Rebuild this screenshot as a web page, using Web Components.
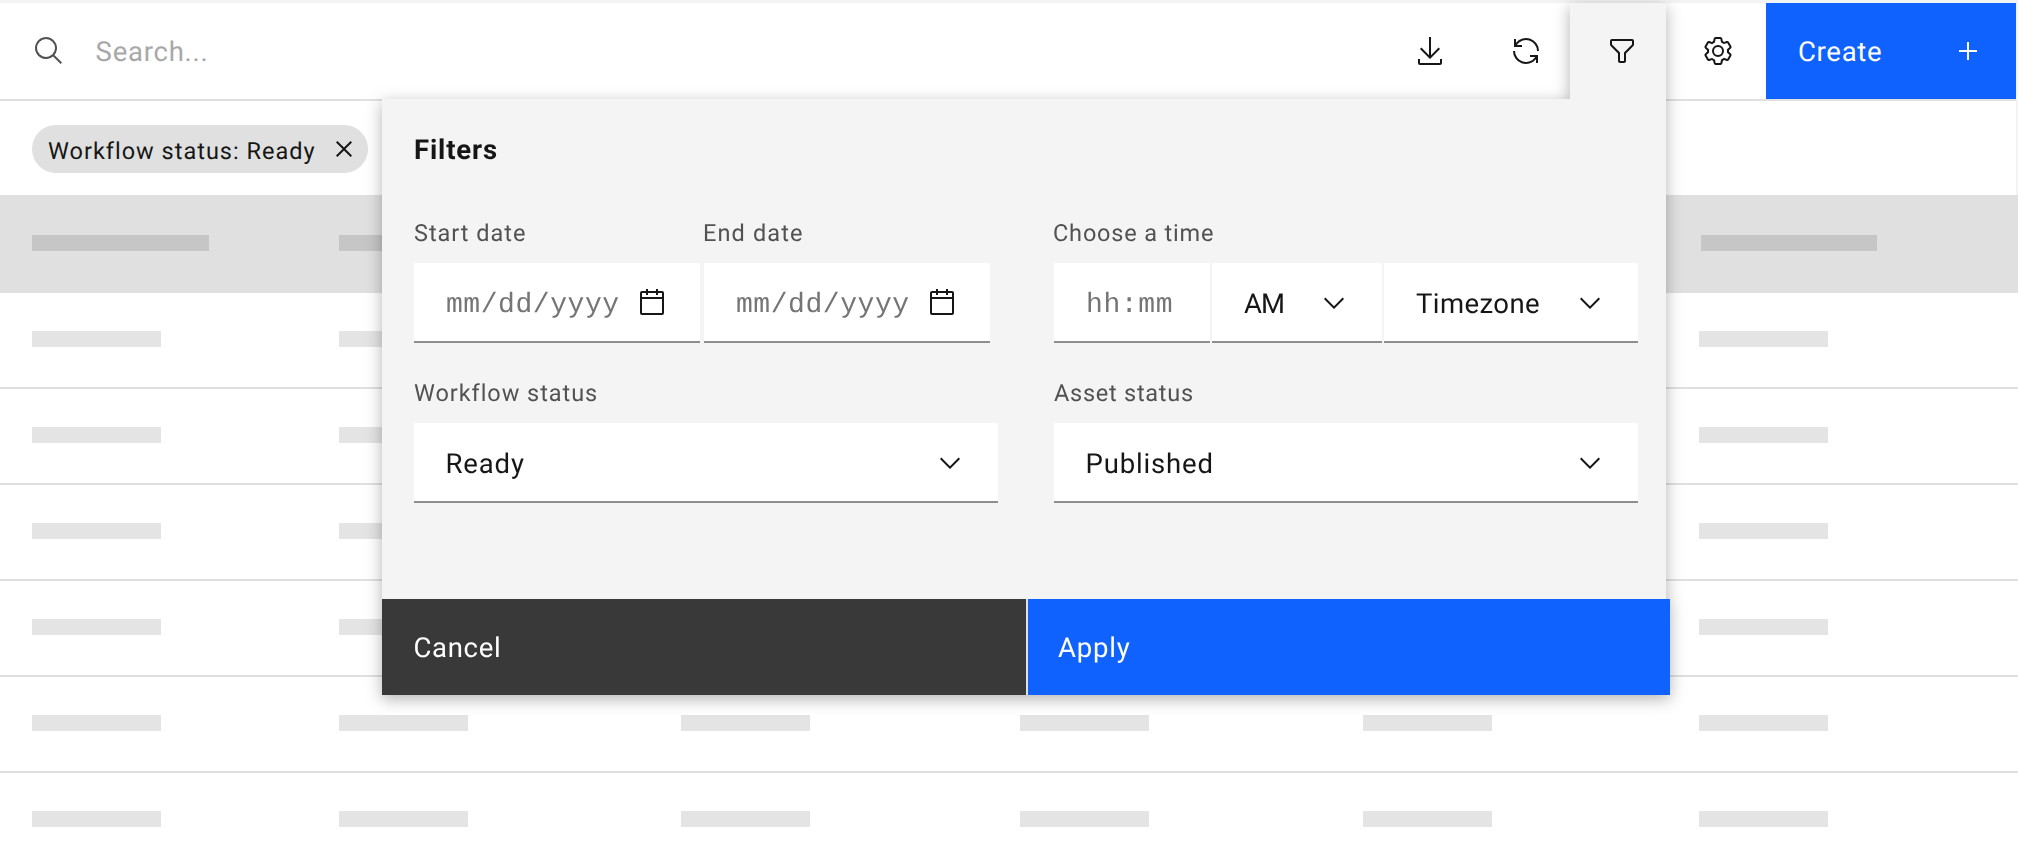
<!DOCTYPE html>
<html lang="en">
<head>
<meta charset="utf-8">
<title>Filters</title>
<style>
html,body{margin:0;height:100%;overflow:hidden;background:#fff}
body{font-family:Roboto,"Liberation Sans",sans-serif;color:#161616;text-rendering:geometricPrecision}
</style>
</head>
<body>
<data-page></data-page>
<script>
const ICONS = {
  search: '<path d="M29 27.59l-7.55-7.55a11 11 0 10-1.41 1.41L27.59 29zM4 13a9 9 0 119 9A9 9 0 014 13z"/>',
  download: '<path d="M26 24v4H6v-4H4v4a2 2 0 002 2h20a2 2 0 002-2v-4zM26 14l-1.41-1.41L17 20.17V2h-2v18.17l-7.59-7.58L6 14l10 10z"/>',
  renew: '<path d="M12 10H6.78A11 11 0 0127 16h2A13 13 0 006 7.68V4H4v8h8zM20 22h5.22A11 11 0 015 16H3a13 13 0 0023 8.32V28h2v-8h-8z"/>',
  filter: '<path d="M18 28h-4a2 2 0 01-2-2v-7.59L4.59 11A2 2 0 014 9.59V6a2 2 0 012-2h20a2 2 0 012 2v3.59a2 2 0 01-.59 1.41L20 18.41V26a2 2 0 01-2 2zM6 6v3.59l8 8V26h4v-8.41l8-8V6z"/>',
  settings: '<path d="M27,16.76c0-.25,0-.5,0-.76s0-.51,0-.77l1.92-1.68A2,2,0,0,0,29.3,11L26.94,7a2,2,0,0,0-1.73-1,2,2,0,0,0-.64.1l-2.43.82a11.35,11.35,0,0,0-1.31-.75l-.51-2.52a2,2,0,0,0-2-1.61H13.64a2,2,0,0,0-2,1.61l-.51,2.52a11.48,11.48,0,0,0-1.32.75L7.43,6.06A2,2,0,0,0,6.79,6,2,2,0,0,0,5.06,7L2.7,11a2,2,0,0,0,.41,2.51L5,15.24c0,.25,0,.5,0,.76s0,.51,0,.77L3.11,18.45A2,2,0,0,0,2.7,21L5.06,25a2,2,0,0,0,1.73,1,2,2,0,0,0,.64-.1l2.43-.82a11.35,11.35,0,0,0,1.31.75l.51,2.52a2,2,0,0,0,2,1.61h4.72a2,2,0,0,0,2-1.61l.51-2.52a11.48,11.48,0,0,0,1.32-.75l2.42.82a2,2,0,0,0,.64.1,2,2,0,0,0,1.73-1L29.3,21a2,2,0,0,0-.41-2.51ZM25.21,24l-3.43-1.16a8.86,8.86,0,0,1-2.71,1.57L18.36,28H13.64l-.71-3.55a9.36,9.36,0,0,1-2.7-1.57L6.79,24,4.43,20l2.72-2.4a8.9,8.9,0,0,1,0-3.13L4.43,12,6.79,8l3.43,1.16a8.86,8.86,0,0,1,2.71-1.57L13.64,4h4.72l.71,3.55a9.36,9.36,0,0,1,2.7,1.57L25.21,8,27.57,12l-2.72,2.4a8.9,8.9,0,0,1,0,3.13L27.57,20Z"/><circle cx="16" cy="16" r="5" fill="none" stroke="currentColor" stroke-width="2"/>',
  add: '<path d="M17 15V7h-2v8H7v2h8v8h2v-8h8v-2z"/>',
  close: '<path d="M24 9.4L22.6 8 16 14.6 9.4 8 8 9.4l6.6 6.6L8 22.6 9.4 24l6.6-6.6 6.6 6.6 1.4-1.4-6.6-6.6z"/>',
  calendar: '<path d="M26 4h-4V2h-2v2h-8V2h-2v2H6a2 2 0 00-2 2v20a2 2 0 002 2h20a2 2 0 002-2V6a2 2 0 00-2-2zM6 6h4v2h2V6h8v2h2V6h4v4H6zm0 6h20v14H6z"/>',
  chevron: '<path d="M16 22L6 12l1.4-1.4 8.6 8.6 8.6-8.6L26 12z"/>'
};

class Base extends HTMLElement {
  render(html) {
    if (!this.shadowRoot) this.attachShadow({ mode: 'open' });
    const t = document.createElement('template');
    t.innerHTML = html;
    this.shadowRoot.replaceChildren(t.content.cloneNode(true));
  }
  a(name, fallback = '') { return this.getAttribute(name) ?? fallback; }
}

customElements.define('ui-icon', class extends Base {
  connectedCallback() {
    this.render(`<style>:host{display:block;width:32px;height:32px;flex:none}svg{display:block;fill:currentColor}</style>
      <svg width="32" height="32" viewBox="0 0 32 32">${ICONS[this.a('name')]}</svg>`);
  }
});

/* One line of text tracked out so that its drawn width equals the "ink" attribute. */
const pen = document.createElement('canvas').getContext('2d');
customElements.define('fit-text', class extends Base {
  connectedCallback() {
    this.render(`<style>:host{display:block;white-space:pre;font-kerning:normal;flex:none}</style><slot></slot>`);
    const cs = getComputedStyle(this), text = this.textContent;
    pen.font = `${cs.fontWeight} ${cs.fontSize} ${cs.fontFamily}`;
    const m = pen.measureText(text);
    const ink = m.actualBoundingBoxRight + m.actualBoundingBoxLeft;
    this.style.letterSpacing = ((+this.a('ink') - ink) / (text.length - 1)).toFixed(3) + 'px';
    this.style.marginLeft = m.actualBoundingBoxLeft.toFixed(2) + 'px';
  }
});

customElements.define('tool-bar', class extends Base {
  connectedCallback() {
    this.render(`<style>
      :host{display:flex;height:96px;border-bottom:2px solid #e0e0e0;margin-right:2px;background:#fff;align-items:center;font-size:27.5px;line-height:32px}
      .search{display:flex;flex:1;gap:32px;padding-left:32.6px;color:#525252}
      .search ui-icon{margin-top:.5px}
      .search fit-text{color:#a8a8a8;padding-top:1px}
      .act{width:96px;display:flex;justify-content:center}
      .create{box-sizing:border-box;width:250px;height:96px;background:#0f62fe;color:#fff;display:flex;align-items:center;justify-content:space-between;padding:0 32px 0 33px}
      .create fit-text{padding-top:1px}
    </style>
    <div class="search"><ui-icon name="search"></ui-icon><fit-text ink="110">Search...</fit-text></div>
    <div class="act"><ui-icon name="download"></ui-icon></div>
    <div class="act"><ui-icon name="renew"></ui-icon></div>
    <div class="act"></div>
    <div class="act"><ui-icon name="settings"></ui-icon></div>
    <div class="create"><fit-text ink="82">Create</fit-text><ui-icon name="add"></ui-icon></div>`);
  }
});

customElements.define('filter-tag', class extends Base {
  connectedCallback() {
    this.render(`<style>
      :host{box-sizing:border-box;display:flex;align-items:center;justify-content:space-between;width:336px;height:48px;border-radius:24px;background:#e0e0e0;padding:0 8px 0 16px;font-size:23.5px;line-height:28px}
      fit-text{padding-top:3px}
    </style><fit-text ink="266">${this.a('label')}</fit-text><ui-icon name="close"></ui-icon>`);
  }
});

customElements.define('skeleton-row', class extends Base {
  connectedCallback() {
    this.render(`<style>
      :host{box-sizing:border-box;display:grid;grid-template-columns:306.6px 342.4px 339px 343px 336.4px 1fr;height:96px;padding-left:32px;padding-top:38px;border-bottom:2px solid #e0e0e0;--bar:#e4e4e4;--w:129px}
      :host([head]){height:98px;padding-top:40px;border:0;background:#e0e0e0;--bar:#c6c6c6;--w:177px;grid-template-columns:306.6px 342.4px 339px 343px 338.4px 1fr}
      :host([head]) i:last-child{width:175.5px}
      i{height:16px;width:var(--w);background:var(--bar)}
    </style><i></i><i></i><i></i><i></i><i></i><i></i>`);
  }
});

customElements.define('ui-field', class extends Base {
  connectedCallback() {
    const label = this.a('label');
    this.render(`<style>
      :host{display:block;width:${this.a('width')}px}
      .label{height:60px;box-sizing:border-box;padding-top:16px;font-size:23.5px;line-height:28px;color:#525252}
      .box{box-sizing:border-box;height:80px;display:flex;align-items:center;justify-content:space-between;background:#fff;box-shadow:inset 0 -2px #8d8d8d;padding:0 32px 0 ${this.a('pad', '32')}px;font-size:27.5px;line-height:32px}
      .box fit-text{padding-top:1px}
      .mono{font-family:"Liberation Mono",monospace;font-size:28px;color:#757575}
      .box .mono{padding-top:6px}
    </style>
    <div class="label">${label ? `<fit-text ink="${this.a('labelink')}">${label}</fit-text>` : ''}</div>
    <div class="box"><fit-text class="${this.hasAttribute('mono') ? 'mono' : ''}" ink="${this.a('ink')}">${this.a('value')}</fit-text>${this.a('icon') ? `<ui-icon name="${this.a('icon')}"></ui-icon>` : ''}</div>`);
  }
});

customElements.define('filter-panel', class extends Base {
  connectedCallback() {
    this.render(`<style>
      :host{display:flex;flex-direction:column;width:1288px;filter:drop-shadow(0 4px 8px rgba(0,0,0,.3))}
      .tab{box-sizing:border-box;align-self:flex-end;margin-right:4px;width:96px;height:96px;padding-left:36px;background:#f4f4f4;display:flex;align-items:center}
      .body{box-sizing:border-box;width:1284px;height:500px;background:#f4f4f4;padding:0 28px 0 32px}
      .title{height:104px;box-sizing:border-box;padding:35px 0 0 1px;font-weight:700;font-size:27.5px;line-height:32px}
      .row{display:flex;justify-content:space-between;margin-bottom:20px}
      .g4{display:flex;gap:4px}.g2{display:flex;gap:2px}
      .foot{display:flex;gap:2px;background:#e0e0e0;height:96px;color:#fff;font-size:27.5px;line-height:32px}
      .foot div{box-sizing:border-box;display:flex;align-items:center}
      .foot fit-text{padding-top:1px}
      .cancel{width:644px;background:#393939;padding-left:32.4px}
      .apply{flex:1;background:#0f62fe;padding-left:30px}
    </style>
    <div class="tab"><ui-icon name="filter"></ui-icon></div>
    <div class="body">
      <div class="title"><fit-text ink="82">Filters</fit-text></div>
      <div class="row">
        <div class="g4">
          <ui-field width="286" label="Start date" labelink="111" mono pad="33" value="mm/dd/yyyy" ink="171.3" icon="calendar"></ui-field>
          <ui-field width="286" label="End date" labelink="98" mono pad="33" value="mm/dd/yyyy" ink="171.3" icon="calendar"></ui-field>
        </div>
        <div class="g2">
          <ui-field width="156" label="Choose a time" labelink="159" mono pad="34" value="hh:mm" ink="83.7"></ui-field>
          <ui-field width="170" value="AM" ink="39" icon="chevron"></ui-field>
          <ui-field width="254" value="Timezone" ink="123" icon="chevron"></ui-field>
        </div>
      </div>
      <div class="row">
        <ui-field width="584" label="Workflow status" labelink="181.5" pad="33.5" value="Ready" ink="76.5" icon="chevron"></ui-field>
        <ui-field width="584" label="Asset status" labelink="138" pad="33.5" value="Published" ink="124" icon="chevron"></ui-field>
      </div>
    </div>
    <div class="foot"><div class="cancel"><fit-text ink="84.6">Cancel</fit-text></div><div class="apply"><fit-text ink="71.8">Apply</fit-text></div></div>`);
  }
});

customElements.define('data-page', class extends Base {
  connectedCallback() {
    this.render(`<style>
      :host{display:block;position:relative;height:863px;overflow:hidden;background:#f3f3f3;box-sizing:border-box;padding-top:3px}
      .tags{box-sizing:border-box;height:94px;padding:24px 32px 0;background:#fff;margin-right:2px}
      .rows{background:#fff}
      filter-panel{position:absolute;left:382px;top:3px}
    </style>
    <tool-bar></tool-bar>
    <div class="tags"><filter-tag label="Workflow status: Ready"></filter-tag></div>
    <div class="rows"><skeleton-row head></skeleton-row>${'<skeleton-row></skeleton-row>'.repeat(6)}</div>
    <filter-panel></filter-panel>`);
  }
});
</script>
</body>
</html>
